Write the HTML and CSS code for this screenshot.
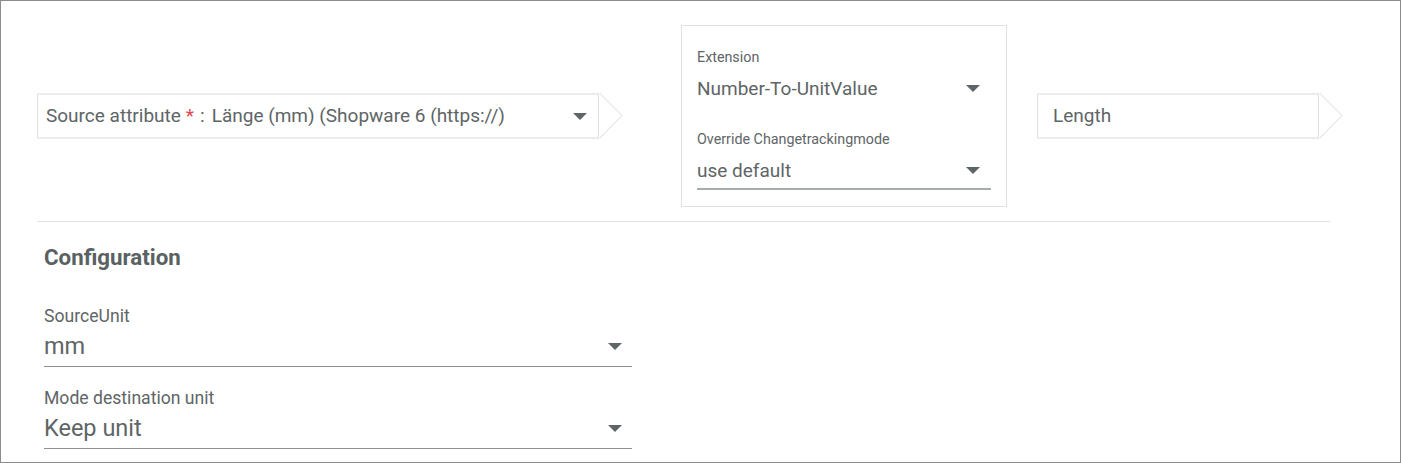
FILE: index.html
```html
<!DOCTYPE html>
<html lang="en">
<head>
<meta charset="utf-8">
<title>Mapping</title>
<link rel="stylesheet" href="styles.css">
</head>
<body>
<div class="frame">
  <div class="flow">
    <div class="node node-source">
      <div class="node-box">
        <span class="src-label">Source attribute</span><span class="req">*</span><span class="colon">:</span>
        <span class="src-value">Länge (mm) (Shopware 6 (https://)</span>
        <span class="caret"></span>
      </div>
      <svg class="node-arrow" width="24" height="46" viewBox="0 0 24 46"><polyline points="0.5,0 23,22.5 0.5,45.5" fill="none" stroke="#d9d9d9" stroke-width="1"/></svg>
    </div>

    <div class="card">
      <div class="field field-card">
        <div class="f-label">Extension</div>
        <div class="f-row no-line"><span class="f-value">Number-To-UnitValue</span><span class="caret"></span></div>
      </div>
      <div class="field field-card second">
        <div class="f-label">Override Changetrackingmode</div>
        <div class="f-row"><span class="f-value">use default</span><span class="caret"></span></div>
      </div>
    </div>

    <div class="node node-target">
      <div class="node-box">
        <span class="tgt-value">Length</span>
      </div>
      <svg class="node-arrow" width="24" height="46" viewBox="0 0 24 46"><polyline points="0.5,0 23,22.5 0.5,45.5" fill="none" stroke="#d9d9d9" stroke-width="1"/></svg>
    </div>
  </div>

  <div class="divider"></div>

  <div class="config">
    <h2 class="config-title">Configuration</h2>
    <div class="field field-config">
      <div class="f-label">SourceUnit</div>
      <div class="f-row"><span class="f-value">mm</span><span class="caret"></span></div>
    </div>
    <div class="field field-config second">
      <div class="f-label">Mode destination unit</div>
      <div class="f-row"><span class="f-value">Keep unit</span><span class="caret"></span></div>
    </div>
  </div>
</div>
</body>
</html>
```

FILE: styles.css
```css
* { box-sizing: border-box; }

html, body {
  margin: 0;
  padding: 0;
  background: #ffffff;
}

body {
  font-family: Roboto, "Liberation Sans", Arial, sans-serif;
  color: #5e6566;
}

.frame {
  width: 1401px;
  height: 463px;
  border: 1px solid #8c8c8c;
  overflow: hidden;
}

/* top flow row */
.flow {
  display: flex;
  align-items: center;
  padding: 24px 0 0 36px;
}

.node {
  display: flex;
  align-items: stretch;
}

.node-box {
  display: flex;
  align-items: center;
  height: 46px;
  border: 1px solid #e2e2e2;
  border-top-width: 2px;
  border-bottom-width: 2px;
  border-top-color: #ececec;
  border-bottom-color: #ececec;
  font-size: 19px;
  line-height: 24px;
}

.node-arrow {
  display: block;
  flex: none;
}

.node-source .node-box {
  width: 562px;
  padding: 0 11px 0 8px;
}

.src-label { white-space: nowrap; }

.req {
  color: #e0464a;
  margin-left: 5px;
}

.colon {
  margin-left: 6px;
  margin-right: 7px;
}

.src-value {
  flex: 1;
  white-space: nowrap;
}

.node-target {
  margin-left: 30px;
}

.node-target .node-box {
  width: 282px;
  padding: 0 15px;
}

.caret {
  flex: none;
  width: 0;
  height: 0;
  border-left: 7px solid transparent;
  border-right: 7px solid transparent;
  border-top: 7px solid #5e6566;
}

/* card in the middle */
.card {
  margin-left: 58px;
  width: 326px;
  border: 1px solid #e2e2e2;
  padding: 23px 15px 16px 15px;
}

.field-card .f-label {
  font-size: 14.3px;
  line-height: 16px;
}

.field-card .f-row {
  display: flex;
  align-items: center;
  margin-top: 6px;
  height: 37px;
  padding: 0 11px 0 0;
  border-bottom: 2px solid #a6acac;
}

.field-card .f-row.no-line {
  border-bottom-color: transparent;
}

.field-card.second {
  margin-top: 23px;
}

.f-value {
  flex: 1;
  white-space: nowrap;
}

.field-card .f-value {
  font-size: 19px;
  line-height: 24px;
}

/* divider */
.divider {
  height: 1px;
  background: #e2e2e2;
  margin: 14px 70px 0 36px;
}

/* configuration */
.config {
  padding: 0 0 0 43px;
}

.config-title {
  margin: 23px 0 0 0;
  font-size: 22.3px;
  line-height: 24px;
  font-weight: 700;
  color: #5a6162;
}

.config-title + .field-config {
  margin-top: 37px;
}

.field-config {
  width: 588px;
}

.field-config .f-label {
  font-size: 17.6px;
  line-height: 20px;
}

.field-config .f-row {
  display: flex;
  align-items: center;
  height: 41px;
  padding: 0 10px 0 0;
  border-bottom: 1px solid #8d9394;
}

.field-config .f-value {
  font-size: 23.5px;
  line-height: 28px;
}

.field-config.second {
  margin-top: 21px;
}
```
